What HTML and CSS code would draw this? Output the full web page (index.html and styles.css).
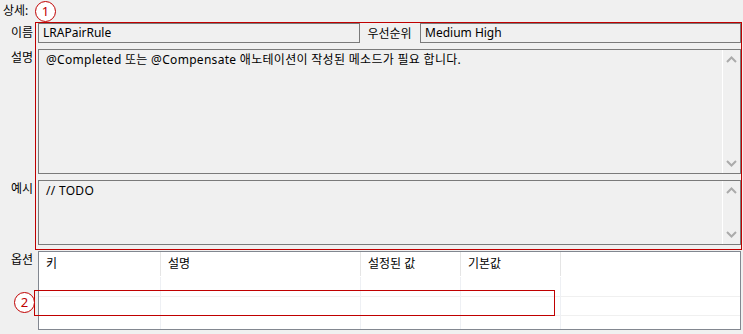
FILE: index.html
```html
<!DOCTYPE html>
<html lang="ko">
<head>
  <meta charset="UTF-8">
  <title>상세</title>
  <link rel="stylesheet" href="styles.css">
</head>
<body>
  <div class="panel">
    <div class="title">상세:</div>

    <div class="form">
      <div class="label">이름</div>
      <div class="field-row">
        <div class="box name">LRAPairRule</div>
        <div class="inline-label">우선순위</div>
        <div class="box priority">Medium High</div>
      </div>

      <div class="label">설명</div>
      <div class="textarea">
        <div class="text">@Completed 또는 @Compensate 애노테이션이 작성된 메소드가 필요 합니다.</div>
        <div class="scroll">
          <svg width="11" height="7" viewBox="0 0 11 7"><path d="M1 6 L5.5 1.5 L10 6" fill="none" stroke="#ababab" stroke-width="2"/></svg>
          <svg width="11" height="7" viewBox="0 0 11 7"><path d="M1 1 L5.5 5.5 L10 1" fill="none" stroke="#ababab" stroke-width="2"/></svg>
        </div>
      </div>

      <div class="label">예시</div>
      <div class="textarea">
        <div class="text">// TODO</div>
        <div class="scroll">
          <svg width="11" height="7" viewBox="0 0 11 7"><path d="M1 6 L5.5 1.5 L10 6" fill="none" stroke="#ababab" stroke-width="2"/></svg>
          <svg width="11" height="7" viewBox="0 0 11 7"><path d="M1 1 L5.5 5.5 L10 1" fill="none" stroke="#ababab" stroke-width="2"/></svg>
        </div>
      </div>

      <div class="label">옵션</div>
      <div class="options">
        <div class="head">키</div>
        <div class="head">설명</div>
        <div class="head">설정된 값</div>
        <div class="head">기본값</div>
        <div class="head last"></div>

        <div class="cell"></div><div class="cell"></div><div class="cell"></div><div class="cell"></div><div class="cell last"></div>
        <div class="cell"></div><div class="cell"></div><div class="cell"></div><div class="cell"></div><div class="cell last"></div>
        <div class="cell"></div><div class="cell"></div><div class="cell"></div><div class="cell"></div><div class="cell last"></div>
      </div>
    </div>

    <!-- annotation marks -->
    <div class="mark-box box-1"></div>
    <div class="mark-num num-1">1</div>
    <div class="mark-box box-2"></div>
    <div class="mark-num num-2">2</div>
  </div>
</body>
</html>
```

FILE: styles.css
```css
body {
  margin: 0;
  background-color: #f0f0f0;
  font-family: "Noto Sans", "Noto Sans CJK KR", sans-serif;
  font-size: 12px;
  color: #000;
}
.panel {
  position: relative;
  width: 743px;
  height: 334px;
  overflow: hidden;
}
.title {
  height: 24px;
  line-height: 24px;
  padding-left: 3px;
  margin-top: -1px;
}
.form {
  display: grid;
  grid-template-columns: 38px 1fr;
  grid-template-rows: 20px 125px 65px 79px;
  row-gap: 6px;
  padding-right: 2px;
}
.label {
  text-align: right;
  padding-right: 5px;
  line-height: 16px;
  padding-top: 1px;
}
.form .label:first-child {
  line-height: 20px;
  padding-top: 0;
}
.field-row {
  display: flex;
  align-items: center;
}
.box {
  height: 20px;
  box-sizing: border-box;
  border: 1px solid #7a7a7a;
  line-height: 18px;
  padding-left: 4px;
}
.name {
  width: 322px;
}
.inline-label {
  width: 59px;
  text-align: center;
  padding-right: 1px;
}
.priority {
  flex: 1;
}
.textarea {
  display: flex;
  border: 1px solid #7a7a7a;
  box-sizing: border-box;
}
.textarea .text {
  flex: 1;
  padding: 2px 7px;
  line-height: 16px;
  letter-spacing: 0.3px;
}
.scroll {
  width: 17px;
  border-left: 1px solid #fff;
  display: flex;
  flex-direction: column;
  justify-content: space-between;
  align-items: center;
  padding: 6px 0 6px;
}
.scroll svg {
  display: block;
}
.options {
  display: grid;
  grid-template-columns: 122px 200px 100px 100px 1fr;
  grid-template-rows: 25px 20px 19px 1fr;
  border: 1px solid #828790;
  background-color: #fff;
  box-sizing: border-box;
}
.head {
  border-right: 1px solid #e5e5e5;
  padding-left: 7px;
  line-height: 24px;
  margin-bottom: 1px;
}
.cell {
  border-right: 1px solid #eef0f4;
  border-bottom: 1px solid #f0f0f0;
}
.options .last {
  border-right: none;
}
.options .cell:nth-last-child(-n+5) {
  border-bottom: none;
}
.mark-box {
  position: absolute;
  border: 1px solid #c00000;
}
.box-1 {
  left: 35px;
  top: 22px;
  width: 705px;
  height: 226px;
}
.box-2 {
  left: 34px;
  top: 290px;
  width: 519px;
  height: 24px;
}
.mark-num {
  position: absolute;
  width: 19px;
  height: 19px;
  border: 1.5px solid #c00000;
  border-radius: 50%;
  background-color: #fff;
  color: #c00000;
  font-size: 13px;
  line-height: 19px;
  text-align: center;
}
.num-1 {
  left: 35px;
  top: 1px;
}
.num-2 {
  left: 14px;
  top: 292px;
}
```
